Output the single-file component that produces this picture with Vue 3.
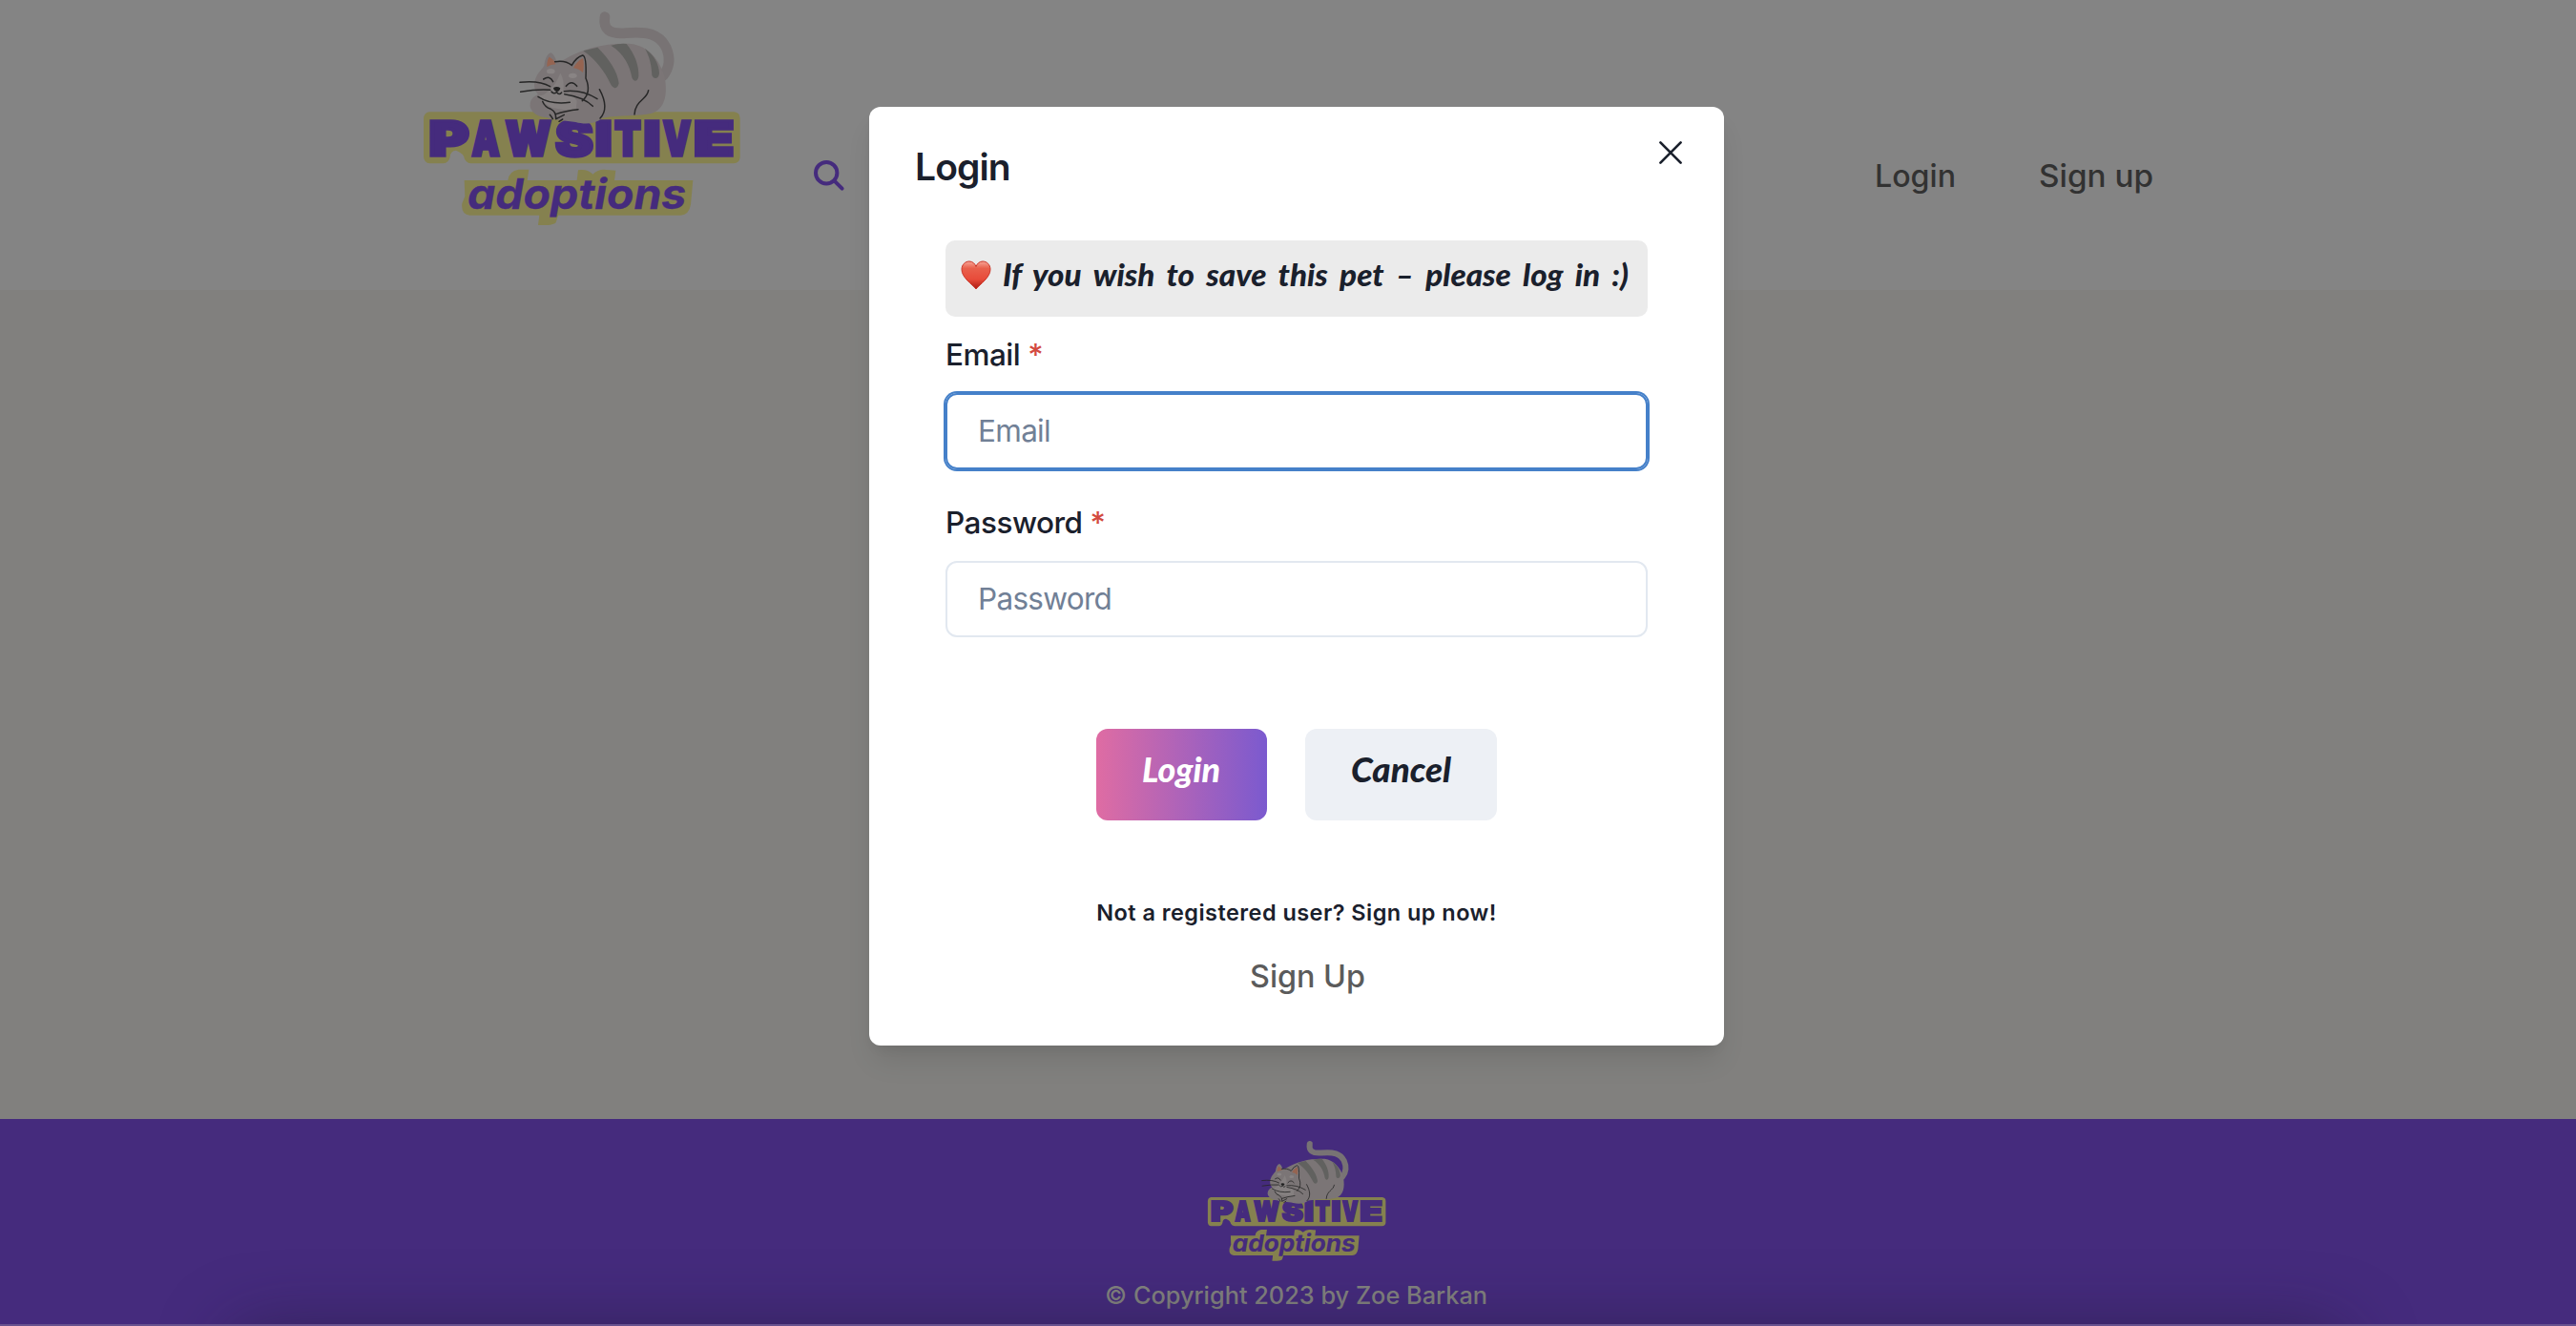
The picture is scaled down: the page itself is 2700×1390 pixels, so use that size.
<script setup>
import { defineComponent, h } from 'vue'

const wordmark = [
  ['P', 59, 125], ['A', 194, 86], ['W', 300, 142], ['S', 457, 118], ['I', 581, 53],
  ['T', 643, 82], ['I', 734, 52], ['V', 795, 87], ['E', 892, 126],
]

const BrandLogo = defineComponent({
  setup() {
    const letters = wordmark.map(([c, x, w]) =>
      h('text', { class: 'word', x, y: 488, textLength: w, lengthAdjust: 'spacingAndGlyphs' }, c))
    const p = (d, fill) => h('path', { d, fill })
    return () => h('svg', { class: 'brand', viewBox: '0 0 1080 750' }, [
      p('M60 352H1018Q1037 354 1037 373V495Q1035 513 1017 514H192Q177 512 171 500Q168 482 144 473Q126 474 125 494Q121 512 104 514H61Q44 512 42 494V373Q43 355 60 352Z', '#85814f'),
      p('M170 567H307Q311 537 341 533H373L368 567H524L528 535Q558 530 574 548Q593 530 617 534L646 536L642 567H889L882 643Q877 676 850 677H465L458 700Q453 707 430 708H402L406 677H187Q159 673 163 640L172 617Z', '#85814f'),
      ...letters,
      h('text', { class: 'sub', x: 180, y: 657, textLength: 688, lengthAdjust: 'spacingAndGlyphs' }, 'adoptions'),
      h('path', { d: 'M612 53C606 92 625 108 678 104C745 98 783 107 804 148C819 182 815 213 795 238', fill: 'none', stroke: '#787374', 'stroke-width': 32, 'stroke-linecap': 'round' }),
      p('M480 190C545 150 620 134 695 138C748 145 785 188 800 242C810 300 800 342 760 356C720 366 660 360 604 371C580 390 550 392 520 384C490 380 450 378 430 370C395 368 373 345 377 326C379 310 390 302 402 297C388 282 386 260 399 236C410 220 417 214 421 207C424 183 432 168 443 166C452 172 458 184 459 193Z', '#7b7576'),
      p('M544 160L589 149C624 184 652 224 656 262C653 280 640 281 631 266C612 226 586 190 544 160Z', '#61615f'),
      p('M631 143Q658 136 680 138C706 170 720 207 718 239C716 257 703 260 697 244C691 207 671 167 631 143Z', '#61615f'),
      p('M738 153C767 174 782 200 783 230C782 248 766 251 760 237C759 205 752 177 738 153Z', '#61615f'),
      p('M430 210Q429 190 437 179Q453 187 457 202Q443 202 430 210Z', '#956451'),
      p('M513 214Q524 192 543 183Q548 204 543 228Q530 216 513 214Z', '#956451'),
      p('M472 230Q486 250 481 287Q510 294 524 317L521 346Q480 347 444 338Q414 321 400 301Q424 302 441 278Q455 270 472 230Z', '#858080'),
      h('ellipse', { cx: 442, cy: 224, rx: 13, ry: 8, fill: '#898484' }),
      h('ellipse', { cx: 511, cy: 238, rx: 13, ry: 8, fill: '#898484' }),
      h('path', { class: 'ink', d: 'M455 194Q487 188 508 205Q522 180 542 174Q555 176 552 246Q571 291 541 317M419 249Q439 236 449 257M490 271Q507 249 524 271M345 259Q405 252 440 272M347 289Q400 280 440 283M484 287Q540 281 588 311M485 296Q546 305 574 334M402 304Q441 330 502 322M444 288Q450 297 461 290Q468 301 476 291M416 319Q423 337 442 343Q459 350 458 374M458 359Q488 348 528 344M439 361Q445 368 448 374M484 361L459 374M479 375L468 382M595 281C614 316 620 348 597 372M749 284C745 314 707 315 705 360' }),
      p('M450 276Q462 269 472 277Q470 288 461 288Q451 285 450 276Z', '#202020'),
    ])
  },
})
</script>

<template>
  <div class="page">
    <header class="topbar">
      <BrandLogo class="logo" />
      <svg class="search" viewBox="0 0 32 32"><circle cx="13.2" cy="13.2" r="11.2" /><path d="M21.3 21.3L29.6 29.6" /></svg>
      <nav>
        <svg class="nav-login" viewBox="0 0 82 50"><text x="-2" y="34" textLength="85" lengthAdjust="spacingAndGlyphs">Login</text></svg>
        <svg class="nav-signup" viewBox="0 0 120 50"><text x="-1" y="34" textLength="120" lengthAdjust="spacingAndGlyphs">Sign up</text></svg>
      </nav>
    </header>
    <main></main>
    <footer>
      <BrandLogo class="logo-small" />
      <svg class="copyright" viewBox="0 0 400 40"><text x="-1" y="28" textLength="401" lengthAdjust="spacingAndGlyphs">© Copyright 2023 by Zoe Barkan</text></svg>
      <div class="edge"></div>
    </footer>

    <section class="modal">
      <div class="modal-head">
        <h2>Login</h2>
        <svg class="close" viewBox="0 0 24 24"><path d="M1.4 1.4L22.6 22.6M22.6 1.4L1.4 22.6" /></svg>
      </div>
      <form @submit.prevent>
        <div class="notice">
          <svg class="heart" viewBox="0 0 32 31">
            <defs>
              <linearGradient id="heartFill" x1="0" y1="0" x2="0" y2="1">
                <stop offset="0" stop-color="#f7a597" /><stop offset=".25" stop-color="#e9604c" />
                <stop offset=".65" stop-color="#e84b3a" /><stop offset="1" stop-color="#a81a12" />
              </linearGradient>
            </defs>
            <path d="M16 30C12 25 1 18 1 9.5C1 4.5 4.5 1 9 1C12.5 1 15 3.5 16 6.5C17 3.5 19.5 1 23 1C27.5 1 31 4.5 31 9.5C31 18 20 25 16 30Z" fill="url(#heartFill)" stroke="#cb3426" stroke-width="1" />
          </svg>
          <svg class="notice-text" viewBox="0 0 660 50"><text class="hand" x="0" y="33" textLength="656" lengthAdjust="spacingAndGlyphs">If you wish to save this pet – please log in :)</text></svg>
        </div>
        <label>Email <span>*</span></label>
        <div class="input focused">Email</div>
        <label class="second">Password <span>*</span></label>
        <div class="input">Password</div>
        <div class="actions">
          <div class="btn primary"><svg viewBox="0 0 84 50"><text class="hand" x="0" y="33" textLength="82" lengthAdjust="spacingAndGlyphs">Login</text></svg></div>
          <div class="btn plain"><svg viewBox="0 0 106 50"><text class="hand" x="0" y="33" textLength="105" lengthAdjust="spacingAndGlyphs">Cancel</text></svg></div>
        </div>
      </form>
      <p>Not a registered user? Sign up now!</p>
      <svg class="signup" viewBox="0 0 120 50"><text x="-1" y="34" textLength="121" lengthAdjust="spacingAndGlyphs">Sign Up</text></svg>
    </section>
  </div>
</template>

<style>
body { margin: 0; overflow: hidden; }
.brand { display: block; overflow: visible; }
.brand text { fill: #452b7d; stroke: #452b7d; }
.brand .word { font: 900 150px Inter, sans-serif; stroke-width: 11px; }
.brand .sub { font: italic 700 130px Inter, sans-serif; stroke-width: 1px; }
.brand .ink { fill: none; stroke: #272727; stroke-width: 4.5px; stroke-linecap: round; }
</style>

<style scoped>
.page { position: relative; width: 2700px; height: 1390px; display: flex; flex-direction: column; overflow: hidden; font-family: Inter, sans-serif; color: #1a202c; }
.page svg { display: block; flex: none; overflow: visible; }
.topbar { height: 304px; flex: none; display: flex; align-items: flex-start; background: #848484; padding-left: 430px; }
.logo { width: 360px; height: 250px; }
.search { width: 32px; height: 32px; margin: 168px 0 0 63px; fill: none; stroke: #452b7d; stroke-width: 4; stroke-linecap: round; }
nav { display: flex; gap: 89px; margin: 162px 0 0 1082px; font: 500 33px Inter, sans-serif; fill: #323232; }
.nav-login { width: 82px; height: 50px; }
.nav-signup { width: 120px; height: 50px; }
main { flex: 1; background: #81807e; }
footer { height: 217px; flex: none; position: relative; display: flex; flex-direction: column; align-items: center; background: #452b7d; overflow: hidden; }
.logo-small { width: 202.5px; height: 140.6px; margin: 16px 0 9.4px 19px; }
.copyright { width: 400px; height: 40px; margin-left: 17px; font: 500 25px Inter, sans-serif; fill: #83837f; }
footer::after { content: ''; position: absolute; left: 250px; right: 250px; top: 230px; height: 60px; border-radius: 30px; box-shadow: 0 0 70px 10px rgba(30, 25, 50, .5); }
.edge { position: absolute; z-index: 1; left: 0; right: 0; bottom: 0; height: 2px; background: #67528e; }

.modal { position: absolute; left: 911px; top: 112px; width: 896px; height: 984px; box-sizing: border-box; padding: 0 80px; display: flex; flex-direction: column; align-items: center; background: #fff; border-radius: 12px; box-shadow: 0 20px 30px -6px rgba(0, 0, 0, .1), 0 8px 12px -4px rgba(0, 0, 0, .05); }
.modal-head { width: 802px; height: 140px; flex: none; display: flex; align-items: flex-start; justify-content: space-between; }
h2 { margin: 36px 0 0 1px; font-size: 39px; line-height: 54px; font-weight: 600; letter-spacing: -.9px; }
.close { width: 24px; height: 24px; margin: 36px -3px 0 0; fill: none; stroke: #1a202c; stroke-width: 2.7; stroke-linecap: round; }
form { width: 736px; display: flex; flex-direction: column; }
.notice { height: 80px; display: flex; background: #ebebeb; border-radius: 10px; }
.heart { width: 32px; height: 31px; margin: 21px 12px 0 16px; }
.notice-text { width: 660px; height: 50px; margin-top: 15px; }
.hand { font: italic 900 32px Lato, sans-serif; fill: #1a202c; }
.notice-text .hand { word-spacing: 5px; }
label { height: 48px; line-height: 48px; margin: 16px 0 16px; font-size: 31.5px; font-weight: 500; letter-spacing: -.5px; }
label.second { margin-top: 32px; }
label span { color: #d34a40; }
label.second + .input { margin-top: 0; }
.input { height: 80px; box-sizing: border-box; border: 2px solid #e2e8f0; border-radius: 12px; padding-left: 32px; line-height: 76px; font-size: 31.5px; letter-spacing: -.7px; color: #718096; }
.input.focused { border-color: #4580c9; box-shadow: 0 0 0 2px #4580c9; }
.actions { display: flex; justify-content: center; gap: 40px; margin-top: 96px; }
.btn { height: 96px; border-radius: 12px; display: flex; justify-content: center; align-items: flex-start; padding-top: 23px; box-sizing: border-box; }
.btn svg { height: 50px; }
.btn .hand { font-size: 36px; }
.primary { width: 179px; background: linear-gradient(90deg, #df6ca3, #7b5acf); }
.primary svg { width: 84px; }
.primary .hand { fill: #fff; }
.plain { width: 201px; background: #edf0f5; }
.plain svg { width: 106px; }
p { margin: 79px 0 0; line-height: 36px; font-size: 23.5px; font-weight: 600; letter-spacing: .45px; white-space: nowrap; }
.signup { width: 120px; height: 50px; margin: 26px 0 0 24px; font: 500 33px Inter, sans-serif; fill: #5b5b5b; }
</style>
